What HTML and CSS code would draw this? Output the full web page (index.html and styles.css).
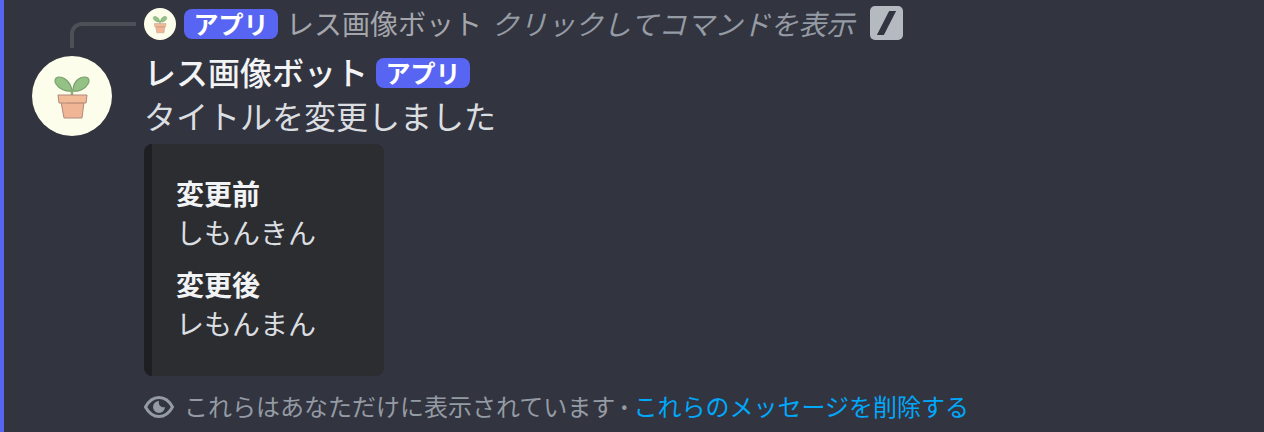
FILE: index.html
```html
<!DOCTYPE html>
<html lang="ja">

<head>
    <meta charset="UTF-8">
    <meta name="viewport" content="width=device-width, initial-scale=1.0">
    <title>レス画像ボット</title>
    <link rel="stylesheet" href="styles.css">
</head>

<body>
    <svg class="defs" width="0" height="0">
        <symbol id="plant" viewBox="0 0 80 80">
            <circle cx="40" cy="40" r="40" fill="#fdfdeb" />
            <path d="M40 35C39 27 33 21 27 21C23 21 22 25 24 28C27 33 34 36 40 35Z" fill="#94c184" stroke="#7a9f72" stroke-width="1.2" />
            <path d="M41 35C41 27 46 21 53 21C57 21 58 25 56 28C53 33 47 36 41 35Z" fill="#94c184" stroke="#7a9f72" stroke-width="1.2" />
            <path d="M40 33V40" stroke="#86ad78" stroke-width="2.500" fill="none" />
            <path d="M29 46H52L50 62H32Z" fill="#f0b594" stroke="#b08a7c" stroke-width="1" />
            <path d="M26 39H55L54 47H27Z" fill="#f2bb98" stroke="#b08a7c" stroke-width="1" />
            <path d="M35 47H52" stroke="#c89478" stroke-width="1" fill="none" />
        </symbol>
    </svg>

    <div class="message">
        <div class="connector"></div>
        <div class="reply">
            <svg class="mini-avatar"><use href="#plant" /></svg>
            <span class="tag">アプリ</span>
            <span class="reply-name">レス画像ボット</span>
            <em class="reply-hint">クリックしてコマンドを表示</em>
            <span class="slash-box"><span class="slash"></span></span>
        </div>

        <div class="main">
            <svg class="avatar"><use href="#plant" /></svg>
            <div class="content">
                <div class="head">
                    <span class="name">レス画像ボット</span>
                    <span class="tag">アプリ</span>
                </div>
                <div class="text">タイトルを変更しました</div>
                <div class="embed">
                    <div class="field">
                        <div class="field-name">変更前</div>
                        <div class="field-value">しもんきん</div>
                    </div>
                    <div class="field">
                        <div class="field-name">変更後</div>
                        <div class="field-value">レもんまん</div>
                    </div>
                </div>
                <div class="notice">
                    <svg class="eye" viewBox="0 0 30 24">
                        <path d="M1.500 12C5 5.500 9.500 2.500 15 2.500S25 5.500 28.500 12C25 18.500 20.500 21.500 15 21.500S5 18.500 1.500 12Z" fill="none" stroke="currentColor" stroke-width="3" />
                        <path d="M15 6A6 6 0 1 0 21 12C18 13 14 11 15 6Z" fill="currentColor" />
                    </svg>
                    <span>これらはあなただけに表示されています</span>
                    <span class="dot">•</span>
                    <span class="link">これらのメッセージを削除する</span>
                </div>
            </div>
        </div>
    </div>
</body>

</html>
```

FILE: styles.css
```css
body {
    margin: 0;
    background-color: #32343f;
    font-family: "Noto Sans CJK JP", "Noto Sans", sans-serif;
}

.defs {
    display: block;
}

.message {
    position: relative;
    height: 424px;
    padding: 8px 0 0 28px;
    border-left: 4px solid #5865f2;
}

.connector {
    position: absolute;
    left: 66px;
    top: 22px;
    width: 66px;
    height: 26px;
    border-top: 4px solid #4e5058;
    border-left: 4px solid #4e5058;
    border-top-left-radius: 12px;
    box-sizing: border-box;
}

.reply {
    display: flex;
    align-items: center;
    height: 32px;
    margin-left: 112px;
}

.mini-avatar {
    width: 32px;
    height: 32px;
    margin-right: 8px;
}

.tag {
    display: inline-block;
    width: 94px;
    height: 30px;
    border-radius: 8px;
    background-color: #5865f2;
    color: #fff;
    font-size: 25px;
    font-weight: 700;
    line-height: 29px;
    text-align: center;
}

.reply-name {
    margin-left: 8px;
    margin-top: -3px;
    color: #a4a6ac;
    font-size: 28px;
    line-height: 30px;
}

.reply-hint {
    margin-left: 9px;
    margin-top: -3px;
    color: #949ba4;
    font-size: 28px;
    line-height: 30px;
}

.slash-box {
    display: flex;
    align-items: center;
    justify-content: center;
    width: 33px;
    height: 34px;
    margin-left: 16px;
    margin-top: -2px;
    border-radius: 5px;
    background-color: #b5bac1;
}

.slash {
    width: 7px;
    height: 24px;
    background-color: #32343f;
    transform: skewX(-27deg);
}

.main {
    display: flex;
    gap: 32px;
    margin-top: 9px;
}

.avatar {
    width: 80px;
    height: 80px;
    margin-top: 7px;
}

.head {
    display: flex;
    align-items: center;
    height: 44px;
}

.name {
    margin-right: 8px;
    color: #f2f3f5;
    font-size: 32px;
    font-weight: 500;
}

.head .tag {
    margin-top: 3px;
}

.text {
    color: #dbdee1;
    font-size: 32px;
    line-height: 44px;
}

.embed {
    width: 240px;
    height: 232px;
    margin-top: 7px;
    padding: 29px 0 0 24px;
    box-sizing: border-box;
    border-left: 8px solid #1e1f22;
    border-radius: 8px;
    background-color: #2b2d31;
}

.field {
    margin-bottom: 12px;
}

.field-name {
    color: #f2f3f5;
    font-size: 28px;
    font-weight: 700;
    line-height: 40px;
}

.field-value {
    color: #dbdee1;
    font-size: 28px;
    line-height: 39px;
}

.notice {
    display: flex;
    align-items: center;
    height: 32px;
    margin-top: 13px;
    color: #949ba4;
    font-size: 24px;
}

.eye {
    width: 30px;
    height: 24px;
    margin-top: 3px;
    margin-right: 10px;
}

.dot {
    margin: 0 6px;
    font-size: 18px;
}

.link {
    color: #00a8fc;
}
```
